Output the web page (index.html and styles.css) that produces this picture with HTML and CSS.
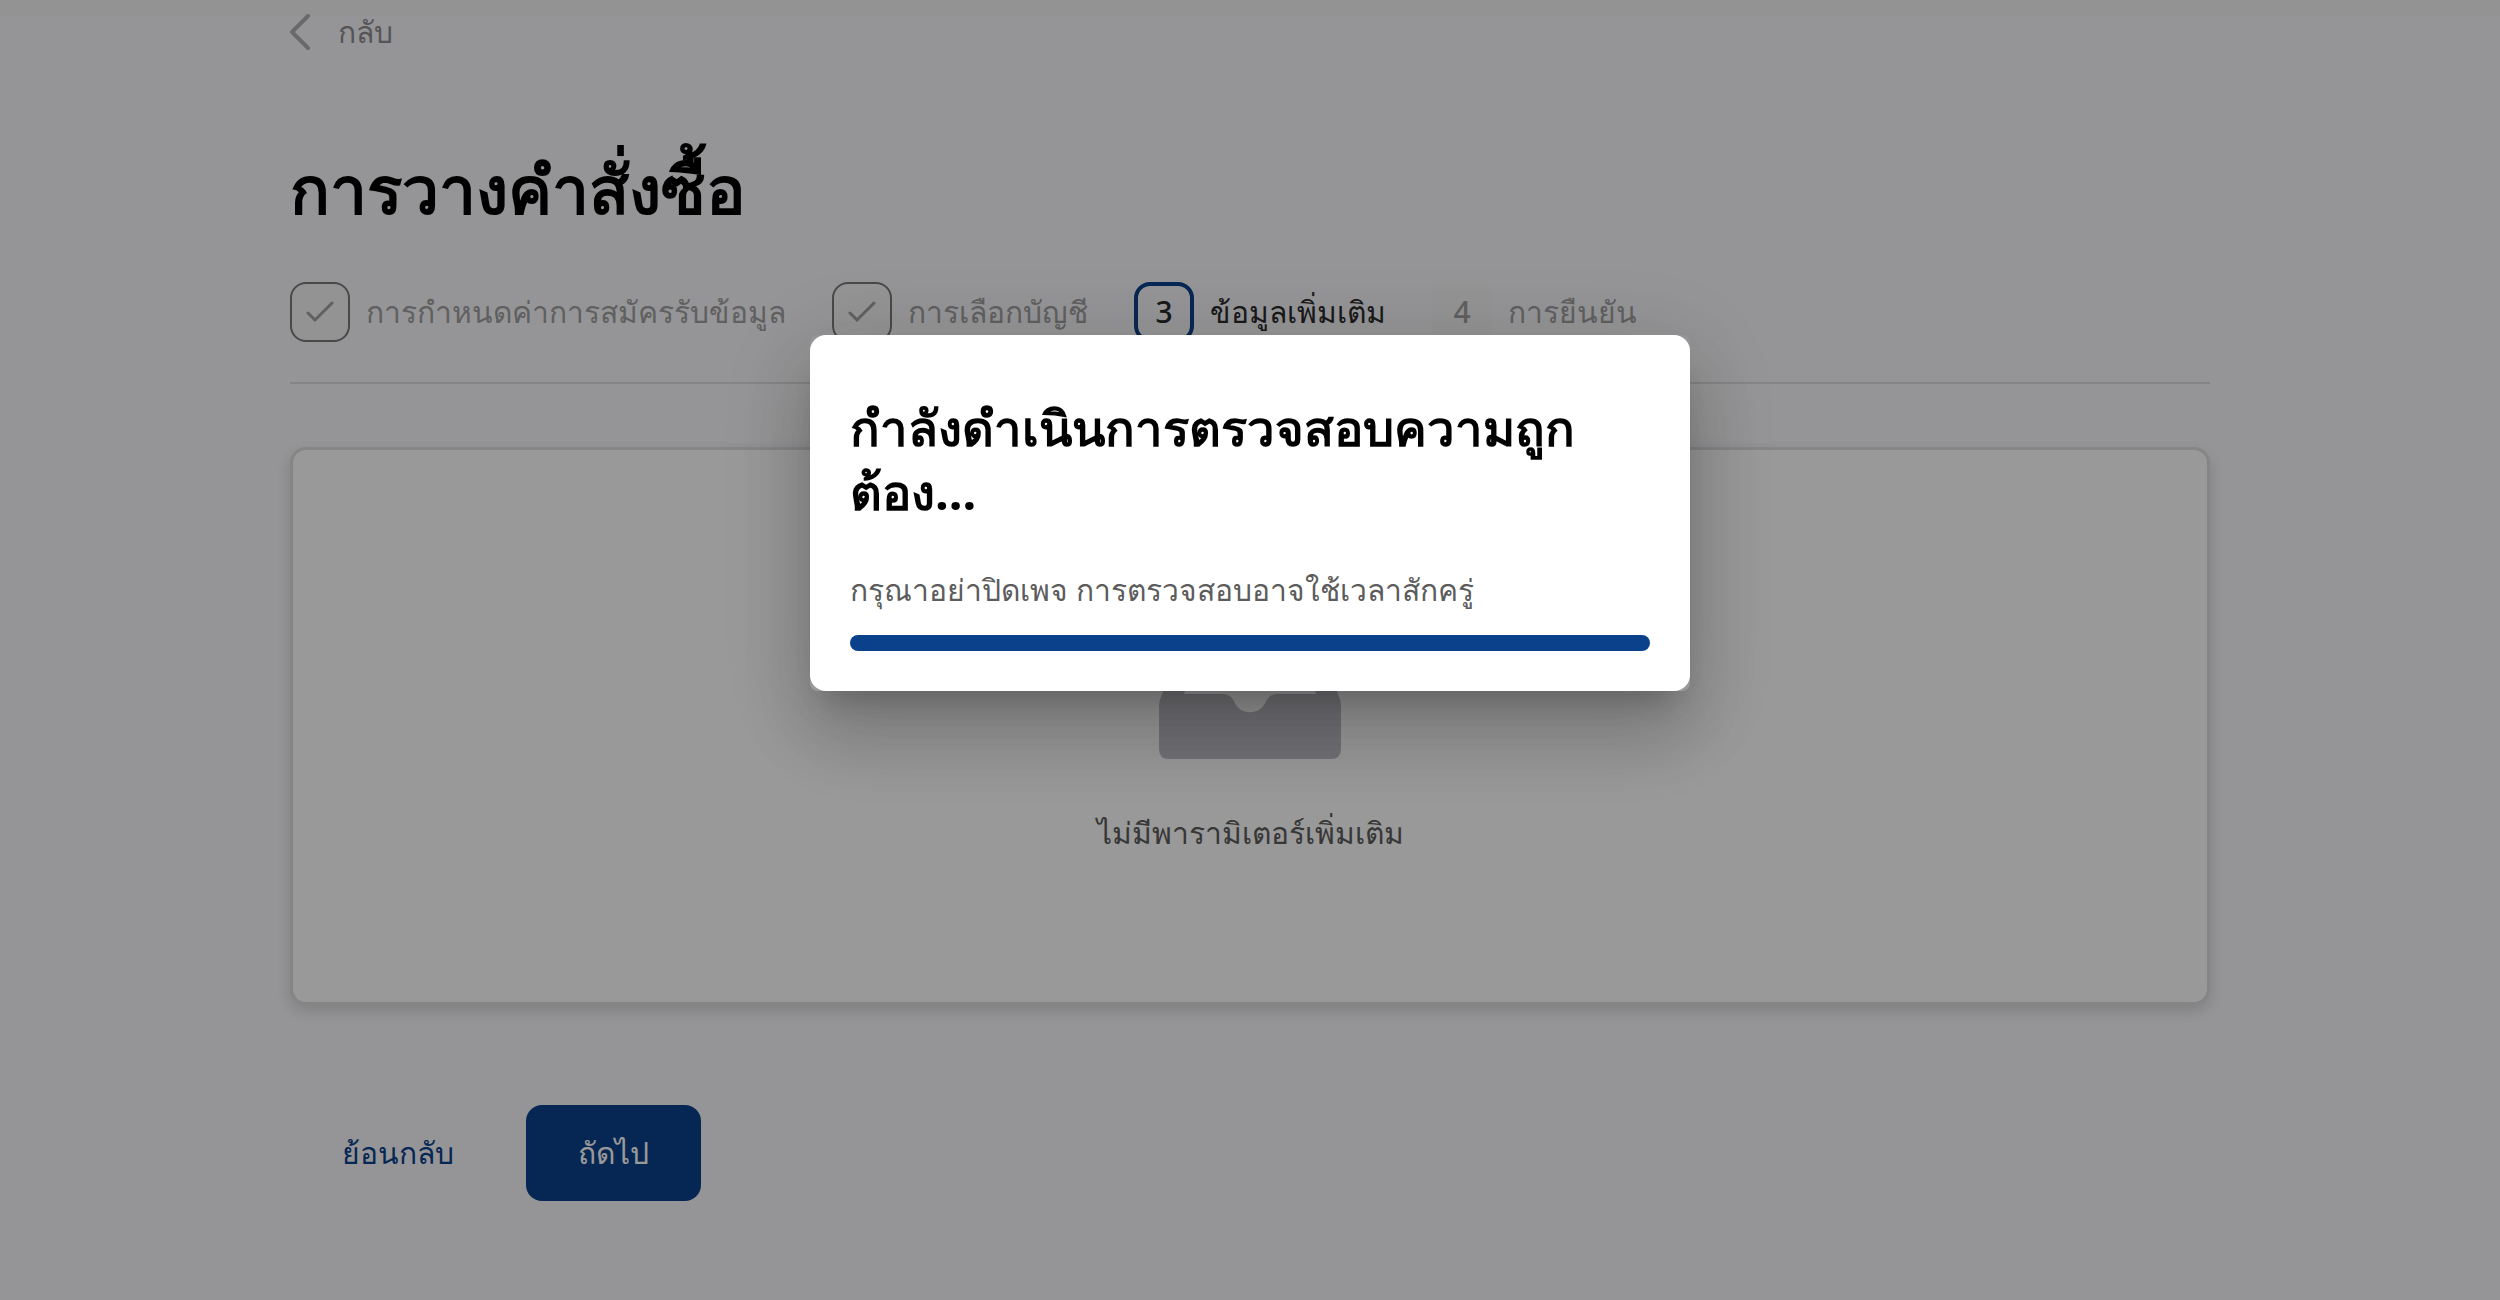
FILE: index.html
```html
<!DOCTYPE html>
<html lang="th">
<head>
    <meta charset="UTF-8">
    <meta name="viewport" content="width=device-width, initial-scale=1.0">
    <title>การวางคำสั่งซื้อ</title>
    <link rel="stylesheet" href="styles.css">
</head>
<body>
    <div class="top-edge"></div>

    <main class="container">
        <a href="#" class="back-link">
            <svg class="back-icon" viewBox="0 0 20 36" fill="none" aria-hidden="true">
                <path d="M18 2L2 18L18 34" stroke="currentColor" stroke-width="4" stroke-linecap="round" stroke-linejoin="round"/>
            </svg>
            <span>กลับ</span>
        </a>

        <h1>การวางคำสั่งซื้อ</h1>

        <ol class="steps">
            <li class="step step-done">
                <span class="step-mark">
                    <svg viewBox="0 0 28 22" fill="none" aria-hidden="true">
                        <path d="M2 12L9 19L26 2" stroke="currentColor" stroke-width="3" stroke-linecap="round"/>
                    </svg>
                </span>
                <span>การกำหนดค่าการสมัครรับข้อมูล</span>
            </li>
            <li class="step step-done">
                <span class="step-mark">
                    <svg viewBox="0 0 28 22" fill="none" aria-hidden="true">
                        <path d="M2 12L9 19L26 2" stroke="currentColor" stroke-width="3" stroke-linecap="round"/>
                    </svg>
                </span>
                <span>การเลือกบัญชี</span>
            </li>
            <li class="step step-active" aria-current="step">
                <span class="step-mark">3</span>
                <span>ข้อมูลเพิ่มเติม</span>
            </li>
            <li class="step">
                <span class="step-mark">4</span>
                <span>การยืนยัน</span>
            </li>
        </ol>

        <section class="card">
            <svg class="tray-icon" viewBox="0 0 182 152" aria-hidden="true">
                <path fill-rule="evenodd" fill="currentColor" d="M38 0H144Q150 0 153 7L180 90Q182 94 182 99V142Q182 152 172 152H10Q0 152 0 142V99Q0 94 2 90L29 7Q32 0 38 0ZM46 18L25 87H65Q72 88 75 94C80 109 102 109 107 94Q110 88 117 87H157L136 18Z"/>
            </svg>
            <p>ไม่มีพารามิเตอร์เพิ่มเติม</p>
        </section>

        <div class="actions">
            <button type="button" class="btn btn-text">ย้อนกลับ</button>
            <button type="button" class="btn btn-primary">ถัดไป</button>
        </div>
    </main>

    <div class="overlay">
        <div class="dialog" role="dialog" aria-modal="true" aria-labelledby="dialog-title">
            <div class="dialog-body">
                <h2 id="dialog-title">กำลังดำเนินการตรวจสอบความถูกต้อง...</h2>
                <label for="check-progress">กรุณาอย่าปิดเพจ การตรวจสอบอาจใช้เวลาสักครู่</label>
                <progress id="check-progress" value="100" max="100"></progress>
            </div>
        </div>
    </div>
</body>
</html>
```
FILE: styles.css
```css
:root {
    --bg: #f9f9fc;
    --surface: #ffffff;
    --text: #2a2a2a;
    --text-secondary: #5c5c5c;
    --muted: #a0a0a0;
    --accent: #0b418b;
    --border: #dedede;
    --radius: 16px;
}

* {
    margin: 0;
    padding: 0;
    box-sizing: border-box;
}

body {
    font-family: "Noto Sans", sans-serif;
    font-size: 30px;
    line-height: 48px;
    color: var(--text);
    background: var(--bg);
    min-height: 100vh;
}

.top-edge {
    height: 8px;
    background: #f6f6f5;
    box-shadow: 0 8px 0 #f6f6f5;
}

.container {
    width: min(1920px, 100% - 64px);
    margin: 0 auto;
}

.back-link {
    display: flex;
    align-items: center;
    gap: 28px;
    width: max-content;
    color: #8e8e94;
    text-decoration: none;
}

.back-icon {
    width: 20px;
    height: 36px;
    color: #afafaf;
}

h1 {
    margin-top: 84px;
    font-size: 66px;
    line-height: 96px;
    color: #000;
}

.steps {
    display: flex;
    gap: 46px;
    margin-top: 46px;
    padding-bottom: 40px;
    border-bottom: 2px solid var(--border);
    list-style: none;
}

.step {
    display: flex;
    align-items: center;
    gap: 16px;
    font-weight: 500;
    color: var(--muted);
}

.step-mark {
    display: flex;
    align-items: center;
    justify-content: center;
    width: 60px;
    height: 60px;
    background: #f6f6f6;
    border-radius: var(--radius);
}

.step-mark svg {
    width: 28px;
    height: 22px;
}

.step-done .step-mark {
    border: 2px solid #7a7a7a;
}

.step-active {
    color: var(--text);
}

.step-active .step-mark {
    background: none;
    border: 4px solid var(--accent);
}

.card {
    display: flex;
    flex-direction: column;
    align-items: center;
    gap: 50px;
    margin-top: 63px;
    padding: 157px 40px 145px;
    color: var(--text-secondary);
    background: var(--surface);
    border: 3px solid var(--border);
    border-radius: var(--radius);
    box-shadow: 0 6px 16px rgba(0, 0, 0, 0.15);
}

.tray-icon {
    width: 182px;
    height: 152px;
    color: #bfbec6;
}

.actions {
    display: flex;
    gap: 20px;
    margin-top: 100px;
}

.btn {
    height: 96px;
    padding: 0 52px;
    font: inherit;
    color: var(--accent);
    background: none;
    border: none;
    border-radius: var(--radius);
    cursor: pointer;
}

.btn-primary {
    font-weight: 500;
    color: #fff;
    background: var(--accent);
}

.overlay {
    position: fixed;
    inset: 0;
    display: flex;
    justify-content: center;
    align-items: flex-start;
    padding: 335px 32px 32px;
    background: rgba(0, 0, 0, 0.4);
}

/* The shadow follows the outer box, the white surface is rounder */
.dialog {
    width: 880px;
    border-radius: 8px;
    box-shadow: 0 22px 30px -14px rgba(0, 0, 0, 0.2),
        0 48px 76px 6px rgba(0, 0, 0, 0.14),
        0 18px 92px 16px rgba(0, 0, 0, 0.12);
}

.dialog-body {
    display: flex;
    flex-direction: column;
    padding: 60px 40px 40px;
    color: var(--text-secondary);
    background: var(--surface);
    border-radius: var(--radius);
}

h2 {
    margin-bottom: 43px;
    font-size: 49px;
    line-height: 64px;
    color: #000;
}

progress {
    appearance: none;
    width: 100%;
    height: 16px;
    margin-top: 21px;
    border: none;
    border-radius: 8px;
    overflow: hidden;
}

progress::-webkit-progress-bar {
    background: #d8d8d8;
}

progress::-webkit-progress-value {
    background: var(--accent);
}
```
